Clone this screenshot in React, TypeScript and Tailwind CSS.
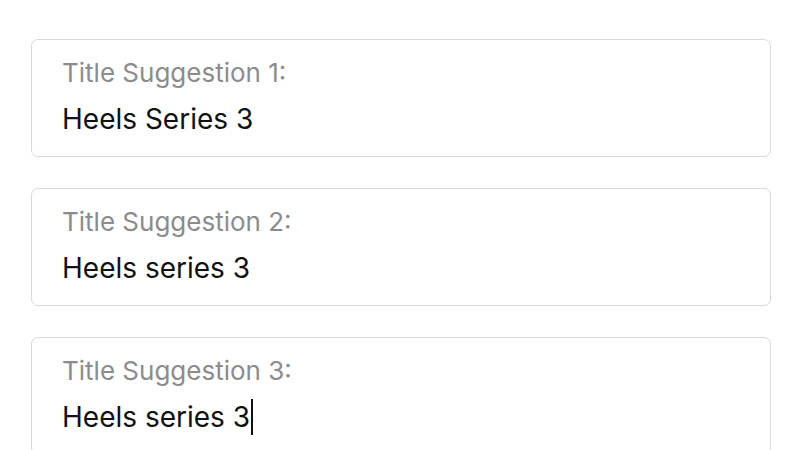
const items = [
  { label: "Title Suggestion 1:", value: "Heels Series 3" },
  { label: "Title Suggestion 2:", value: "Heels series 3" },
  { label: "Title Suggestion 3:", value: "Heels series 3", caret: true },
];

export default function App() {
  return (
    <div className="h-[450px] w-[800px] overflow-hidden bg-white font-['Inter',sans-serif]">
      <div className="flex flex-col gap-[31px] pl-[31px] pr-[29px] pt-[39px]">
        {items.map((item) => (
          <div
            key={item.label}
            className="h-[118px] shrink-0 rounded-[7px] border border-[#d9d9d9] px-[30px] pt-[17px]"
          >
            <p className="text-[26px] leading-[32px] text-[#8c8c8c]">{item.label}</p>
            <div className="mt-[12px] flex items-center text-[28px] leading-[36px] text-[#111111]">
              <span>{item.value}</span>
              {item.caret && <span className="ml-px h-[36px] w-[2px] bg-[#111111]" />}
            </div>
          </div>
        ))}
      </div>
    </div>
  );
}
